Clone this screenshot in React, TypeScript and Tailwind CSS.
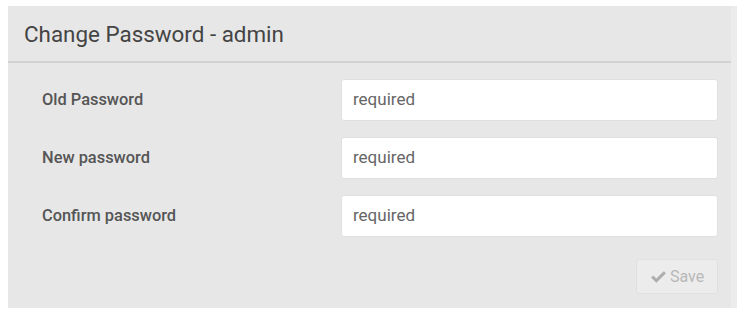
export default function App() {
  const rows = [
    { label: "Old Password" },
    { label: "New password" },
    { label: "Confirm password" },
  ];

  return (
    <div className="w-[745px] h-[309px] bg-white pt-[6px] pl-[8px] overflow-hidden" style={{ fontFamily: "Roboto, 'Liberation Sans', sans-serif" }}>
      <div className="w-[729px] h-[302px] bg-[#e7e7e7] border-r-[6px] border-[#ececec]">
        {/* Header */}
        <div className="h-[57px] border-b-2 border-[#d2d2d2] pl-[16px] pt-[3px] flex items-center">
          <h2 className="text-[22.4px] text-[#444] font-normal">Change Password - admin</h2>
        </div>

        {/* Form */}
        <div className="pt-[16px] pl-[34px] pr-[13px] flex flex-col gap-[16px]">
          {rows.map((r) => (
            <div key={r.label} className="flex items-center">
              <label className="w-[299px] text-[16.4px] font-medium text-[#555]">{r.label}</label>
              <div className="w-[377px] h-[42px] bg-white rounded-[3px] border border-[#e0e0e0] flex items-center pl-[11px] text-[17px] text-[#666]">
                required
              </div>
            </div>
          ))}
        </div>

        <div className="flex justify-end pr-[13px] pt-[22px]">
          <button className="w-[82px] h-[35px] bg-[#ececec] border border-[#e0e0e0] rounded-[3px] flex items-center justify-center gap-[3px] text-[16px] text-[#b8b8b8]">
            <svg width="17" height="14" viewBox="0 0 16 13">
              <path d="M1 7 L3 5 L6 8 L13 1 L15 3 L6 12 Z" fill="#adadad" />
            </svg>
            Save
          </button>
        </div>
      </div>
    </div>
  );
}
